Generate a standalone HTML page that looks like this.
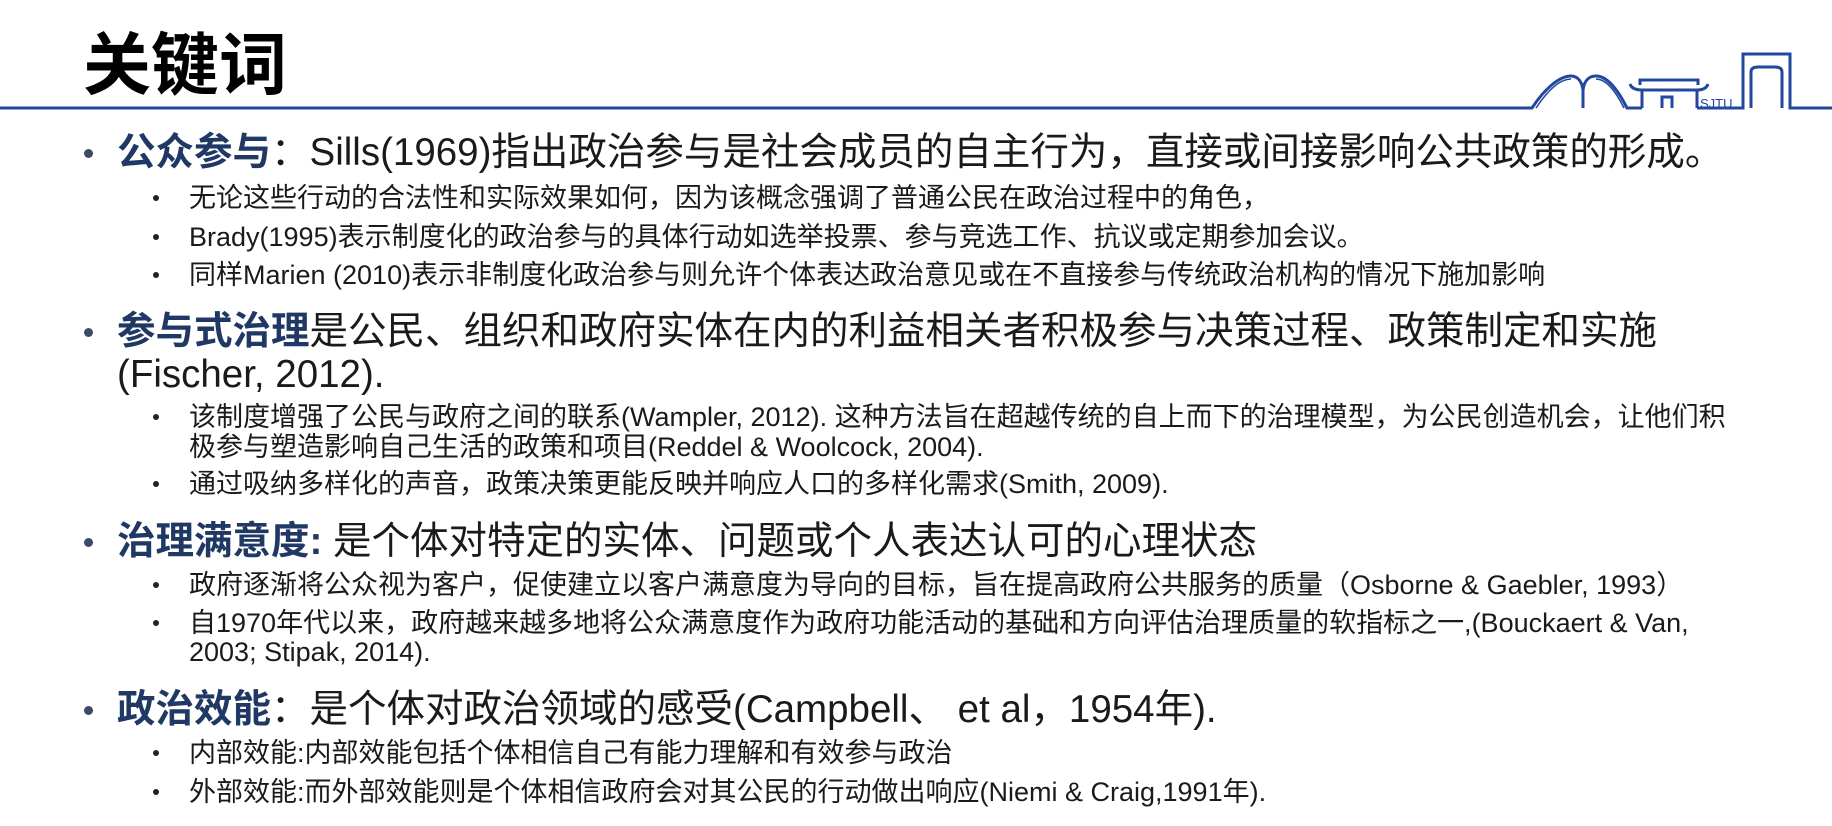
<!DOCTYPE html>
<html><head><meta charset="utf-8"><style>
body{margin:0;width:1832px;height:826px;background:#fff;position:relative;overflow:hidden;font-family:"Liberation Sans","Noto Sans CJK SC",sans-serif;color:#1a1a1a}
.t{position:absolute;white-space:nowrap}
.title{left:83px;top:22px;font-size:68px;font-weight:bold;line-height:76px;color:#000;font-family:"Noto Sans CJK SC",sans-serif}
.m{font-size:38.5px;line-height:44px;height:44px}
.s{font-size:27px;line-height:32px;height:32px}
.b{color:#203864;font-weight:bold}
.d1{position:absolute;width:9px;height:9px;border-radius:50%;background:#3b4a6b}
.d2{position:absolute;width:6px;height:6px;border-radius:50%;background:#222}
</style></head><body>
<div class="t title">关键词</div>
<svg width="1832" height="120" style="position:absolute;left:0;top:0" fill="none" stroke="#22479e" stroke-width="3">
<path d="M0,108 H1532 C1545,88 1560,76 1571,76 C1578,76 1582,82 1583,90 V108 M1583,90 C1584,82 1588,76 1596,76 C1607,76 1618,90 1627,108 H1642"/>
<path d="M1536,108 C1548,90 1560,79 1571,79 M1596,79 C1606,79 1615,90 1624,108" stroke-width="1.5"/>
<path d="M1630,84 Q1632,90 1642,90 H1697 Q1706,90 1708,84 M1642,90 V108 M1697,90 V108 M1640,85 V80 H1698 V85 M1662,108 V97 H1672 V108"/>
<text x="1700" y="108" font-size="13" fill="#22479e" stroke="none" font-family="Liberation Sans">SJTU</text>
<path d="M1697,108 H1743 V54 H1790 V108 H1832 M1751,108 V72 Q1751,67 1758,67 H1775 Q1782,67 1782,72 V108"/>
</svg>

<div class="d1" style="left:84px;top:149px"></div>
<div class="t m" style="left:117px;top:131px"><span class="b">公众参与</span>：Sills(1969)指出政治参与是社会成员的自主行为，直接或间接影响公共政策的形成。</div>
<div class="d2" style="left:153px;top:195px"></div>
<div class="t s" style="left:189px;top:182px">无论这些行动的合法性和实际效果如何，因为该概念强调了普通公民在政治过程中的角色，</div>
<div class="d2" style="left:153px;top:234px"></div>
<div class="t s" style="left:189px;top:221px">Brady(1995)表示制度化的政治参与的具体行动如选举投票、参与竞选工作、抗议或定期参加会议。</div>
<div class="d2" style="left:153px;top:272px"></div>
<div class="t s" style="left:189px;top:259px">同样Marien (2010)表示非制度化政治参与则允许个体表达政治意见或在不直接参与传统政治机构的情况下施加影响</div>

<div class="d1" style="left:84px;top:328px"></div>
<div class="t m" style="left:117px;top:310px"><span class="b">参与式治理</span>是公民、组织和政府实体在内的利益相关者积极参与决策过程、政策制定和实施</div>
<div class="t m" style="left:117px;top:353px">(Fischer, 2012).</div>
<div class="d2" style="left:153px;top:414px"></div>
<div class="t s" style="left:189px;top:401px">该制度增强了公民与政府之间的联系(Wampler, 2012). 这种方法旨在超越传统的自上而下的治理模型，为公民创造机会，让他们积</div>
<div class="t s" style="left:189px;top:431px">极参与塑造影响自己生活的政策和项目(Reddel &amp; Woolcock, 2004).</div>
<div class="d2" style="left:153px;top:481px"></div>
<div class="t s" style="left:189px;top:468px">通过吸纳多样化的声音，政策决策更能反映并响应人口的多样化需求(Smith, 2009).</div>

<div class="d1" style="left:84px;top:538px"></div>
<div class="t m" style="left:117px;top:520px"><span class="b">治理满意度:</span> 是个体对特定的实体、问题或个人表达认可的心理状态</div>
<div class="d2" style="left:153px;top:582px"></div>
<div class="t s" style="left:189px;top:569px">政府逐渐将公众视为客户，促使建立以客户满意度为导向的目标，旨在提高政府公共服务的质量（Osborne &amp; Gaebler, 1993）</div>
<div class="d2" style="left:153px;top:620px"></div>
<div class="t s" style="left:189px;top:607px">自1970年代以来，政府越来越多地将公众满意度作为政府功能活动的基础和方向评估治理质量的软指标之一,(Bouckaert &amp; Van,</div>
<div class="t s" style="left:189px;top:636px">2003; Stipak, 2014).</div>

<div class="d1" style="left:84px;top:706px"></div>
<div class="t m" style="left:117px;top:688px"><span class="b">政治效能</span>：是个体对政治领域的感受(Campbell、 et al，1954年).</div>
<div class="d2" style="left:153px;top:750px"></div>
<div class="t s" style="left:189px;top:737px">内部效能:内部效能包括个体相信自己有能力理解和有效参与政治</div>
<div class="d2" style="left:153px;top:789px"></div>
<div class="t s" style="left:189px;top:776px">外部效能:而外部效能则是个体相信政府会对其公民的行动做出响应(Niemi &amp; Craig,1991年).</div>
</body></html>
